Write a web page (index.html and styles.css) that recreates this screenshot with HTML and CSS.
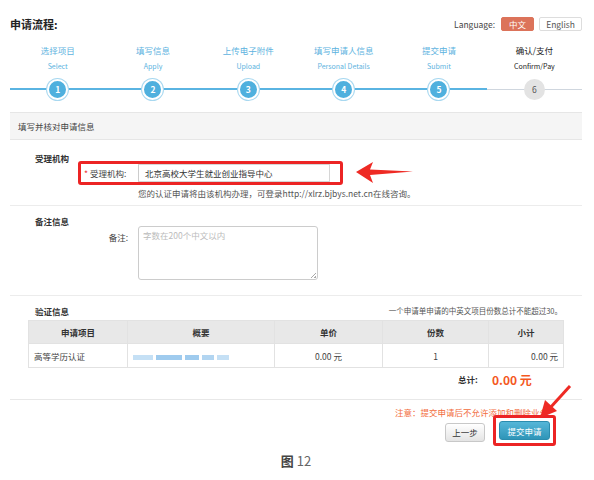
FILE: index.html
```html
<!DOCTYPE html>
<html lang="zh-CN">
<head>
<meta charset="utf-8">
<title>申请流程</title>
<link rel="stylesheet" href="styles.css">
</head>
<body>
<div class="page">
  <div class="topbar">
    <div class="title">申请流程:</div>
    <div class="lang">
      <span class="lang-label">Language:</span>
      <span class="lang-btn active">中文</span>
      <span class="lang-btn">English</span>
    </div>
  </div>

  <div class="steps">
    <div class="step done"><div class="zh">选择项目</div><div class="en">Select</div><div class="track"><span class="dot">1</span></div></div>
    <div class="step done"><div class="zh">填写信息</div><div class="en">Apply</div><div class="track"><span class="dot">2</span></div></div>
    <div class="step done"><div class="zh">上传电子附件</div><div class="en">Upload</div><div class="track"><span class="dot">3</span></div></div>
    <div class="step done"><div class="zh">填写申请人信息</div><div class="en">Personal Details</div><div class="track"><span class="dot">4</span></div></div>
    <div class="step done"><div class="zh">提交申请</div><div class="en">Submit</div><div class="track"><span class="dot">5</span></div></div>
    <div class="step todo"><div class="zh">确认/支付</div><div class="en">Confirm/Pay</div><div class="track"><span class="dot">6</span></div></div>
  </div>

  <div class="bar">填写并核对申请信息</div>

  <div class="section sec-org">
    <div class="sec-title">受理机构</div>
    <div class="org-row">
      <div class="mark-box">
        <label class="field-label"><span class="req">*</span> 受理机构:</label>
        <div class="input">北京高校大学生就业创业指导中心</div>
      </div>
      <svg class="arrow-left" width="58" height="22" viewBox="0 0 58 22"><polygon points="0,10 17,0 14,7.5 57,9.5 14,13 17,21" fill="#ee2a24"/></svg>
    </div>
    <div class="help">您的认证申请将由该机构办理，可登录http://xlrz.bjbys.net.cn在线咨询。</div>
  </div>

  <div class="section sec-note">
    <div class="sec-title">备注信息</div>
    <div class="note-row">
      <label class="field-label right">备注:</label>
      <div class="textarea"><span class="ph">字数在200个中文以内</span><span class="grip"></span></div>
    </div>
  </div>

  <div class="section sec-verify">
    <div class="verify-head">
      <div class="sec-title">验证信息</div>
      <div class="limit">一个申请单申请的中英文项目份数总计不能超过30。</div>
    </div>
    <table class="items">
      <thead>
        <tr><th class="c1">申请项目</th><th class="c2">概要</th><th class="c3">单价</th><th class="c4">份数</th><th class="c5">小计</th></tr>
      </thead>
      <tbody>
        <tr>
          <td class="left">高等学历认证</td>
          <td class="left"><span class="blur"><i class="b1"></i><i class="b2"></i><i class="b3"></i><i class="b4"></i><i class="b5"></i></span></td>
          <td class="center">0.00 元</td>
          <td class="center qty">1</td>
          <td class="right">0.00 元</td>
        </tr>
      </tbody>
    </table>
    <div class="total"><span class="total-label">总计:</span><span class="total-val">0.00 元</span></div>
  </div>

  <div class="footer">
    <div class="warn">注意：提交申请后不允许添加和删除业务</div>
    <div class="btns">
      <button class="btn prev">上一步</button>
      <div class="mark-box btn-mark"><button class="btn submit">提交申请</button></div>
    </div>
    <svg class="arrow-down" width="36" height="36" viewBox="0 0 36 36"><line x1="33" y1="1" x2="13" y2="23" stroke="#ee2a24" stroke-width="3"/><polygon points="3,33 8,15 20,26" fill="#ee2a24"/></svg>
  </div>

  <div class="caption"><b>图</b> 12</div>
</div>
</body>
</html>
```
FILE: styles.css
```css
* { box-sizing: border-box; }
body {
  margin: 0;
  background: #fff;
  font-family: "Noto Sans CJK SC", "Noto Sans", sans-serif;
  color: #333;
  font-size: 8.5px;
}
.page {
  width: 594px;
  padding: 0 12px 0 10px;
  position: relative;
}
.topbar {
  margin-top: 17px;
  height: 14px;
  display: flex;
  justify-content: space-between;
  align-items: center;
}
.title {
  font-size: 11px;
  font-weight: bold;
  color: #222;
  line-height: 14px;
}
.lang {
  display: flex;
  align-items: center;
  gap: 5px;
  font-size: 8.5px;
  color: #444;
}
.lang-label { margin-right: 1px; }
.lang-btn {
  height: 14px;
  line-height: 12px;
  padding: 0 6px;
  border: 1px solid #ddd;
  border-radius: 2px;
  color: #555;
  font-size: 8.5px;
}
.lang-btn.active {
  background: #dc735a;
  border-color: #dc735a;
  color: #fff;
  padding: 0 7px;
}
.steps {
  margin-top: 13px;
  display: grid;
  grid-template-columns: repeat(6, 1fr);
}
.step { text-align: center; }
.zh { font-size: 8.5px; line-height: 12px; color: #5db3e0; }
.en { font-size: 7px; line-height: 12px; margin-top: 4px; color: #5db3e0; }
.step.todo .zh, .step.todo .en { color: #222; }
.track {
  margin-top: 6px;
  height: 22px;
  position: relative;
  display: flex;
  justify-content: center;
  align-items: center;
}
.track::before {
  content: "";
  position: absolute;
  left: 0; right: 0; top: 10px;
  height: 2px;
  background: #5ab4e2;
}
.step.todo .track::before { background: #cfd6de; height: 1px; top: 10.5px; }
.dot {
  position: relative;
  width: 21px; height: 21px;
  border-radius: 50%;
  background: #4fb0de;
  border: 2px solid #fff;
  box-shadow: 0 0 0 1px #a8d8f0;
  color: #fff;
  font-weight: bold;
  font-size: 8.5px;
  line-height: 17px;
  text-align: center;
}
.step.todo .dot {
  background: #e3e3e3;
  box-shadow: none;
  border-color: #e3e3e3;
  color: #555;
  font-weight: normal;
}
.bar {
  margin-top: 12px;
  height: 28px;
  line-height: 26px;
  background: #f5f5f5;
  border-top: 1px solid #e6e6e6;
  border-bottom: 1px solid #e6e6e6;
  padding-left: 8px;
  font-size: 8.5px;
  color: #444;
}
.section { border-bottom: 1px solid #ececec; }
.sec-title {
  font-weight: bold;
  font-size: 8.5px;
  line-height: 12px;
  color: #333;
  padding-left: 25px;
}
.sec-org { padding-top: 12px; height: 66px; }
.org-row {
  margin-top: -3px;
  display: flex;
  align-items: center;
  padding-left: 68px;
}
.mark-box {
  border: 3px solid #ec2424;
  border-radius: 3px;
}
.sec-org .mark-box {
  width: 265px;
  height: 24px;
  display: flex;
  align-items: center;
  padding-left: 3px;
}
.field-label {
  width: 54px;
  font-size: 8.5px;
  color: #444;
}
.req { color: #e33; }
.input {
  width: 192px;
  height: 18px;
  border: 1px solid #d6d6d6;
  border-left-color: #ccc;
  line-height: 16px;
  padding-left: 6px;
  font-size: 8.5px;
  color: #333;
}
.arrow-left { margin-left: 13px; }
.help {
  margin-top: 2px;
  padding-left: 128px;
  font-size: 8.5px;
  line-height: 12px;
  color: #555;
}
.sec-note { padding-top: 9px; height: 90px; }
.note-row {
  margin-top: -1px;
  display: flex;
  align-items: flex-start;
  padding-left: 73px;
}
.field-label.right {
  width: 45px;
  text-align: right;
  padding-right: 0;
  margin-top: 5px;
  margin-right: 10px;
}
.textarea {
  position: relative;
  width: 180px;
  height: 54px;
  border: 1px solid #ccc;
  border-radius: 3px;
  padding: 2px 4px;
  line-height: 12px;
}
.ph { color: #bbb; font-size: 8.5px; }
.grip {
  position: absolute;
  right: 1px; bottom: 1px;
  width: 5px; height: 5px;
  background: linear-gradient(135deg, transparent 45%, #aaa 45%, #aaa 55%, transparent 55%, transparent 75%, #aaa 75%);
}
.sec-verify { padding-top: 9px; height: 104px; border-bottom: 1px solid #e8e8e8; }
.verify-head {
  display: flex;
  justify-content: space-between;
  align-items: center;
  padding-right: 20px;
}
.limit { font-size: 7.5px; color: #555; line-height: 12px; }
.items {
  margin-top: 3px;
  margin-left: 18px;
  width: 536px;
  border-collapse: collapse;
  font-size: 8.5px;
}
.items th, .items td {
  border: 1px solid #e2e2e2;
  padding: 0 5px;
}
.items th {
  background: #e8e8e8;
  height: 23px;
  font-weight: bold;
  color: #333;
}
.items td { height: 24px; color: #444; }
.c1 { width: 99px; }
.c2 { width: 147px; }
.c3 { width: 108px; }
.c4 { width: 106px; }
.left { text-align: left; }
.center { text-align: center; }
.right { text-align: right; }
.qty { color: #8a5a2a; }
.blur { display: inline-flex; gap: 3px; height: 6px; align-items: center; filter: blur(0.6px); }
.blur i { display: block; height: 5px; background: #9fcbee; }
.b1 { width: 20px; opacity: .6; }
.b2 { width: 26px; }
.b3 { width: 14px; }
.b4 { width: 12px; opacity: .8; }
.b5 { width: 12px; opacity: .6; }
.total {
  display: flex;
  align-items: center;
  padding-left: 448px;
  margin-top: 4px;
  height: 14px;
}
.total-label { font-weight: bold; width: 34px; font-size: 8.5px; }
.total-val { color: #f4581e; font-weight: bold; font-size: 12px; }
.footer {
  position: relative;
  padding-right: 34px;
}
.warn {
  margin-top: 6px;
  text-align: right;
  color: #f26c3c;
  font-size: 8.5px;
  line-height: 12px;
}
.btns {
  display: flex;
  justify-content: flex-end;
  align-items: center;
  gap: 8px;
  margin-top: -3px;
  margin-right: -8px;
}
.btn {
  font-family: inherit;
  font-size: 8.5px;
  border-radius: 3px;
  cursor: pointer;
  height: 19px;
  padding: 0;
}
.prev {
  width: 40px;
  margin-top: 3px;
  background: linear-gradient(#ffffff, #e4e4e4);
  border: 1px solid #c8c8c8;
  color: #333;
}
.btn-mark {
  padding: 3px;
  border-radius: 3px;
}
.submit {
  width: 51px;
  background: linear-gradient(#55b6d8, #2f95b8);
  border: 1px solid #2b8cae;
  color: #fff;
}
.arrow-down {
  position: absolute;
  right: 9px;
  top: -21px;
}
.caption {
  text-align: center;
  font-size: 13px;
  color: #666;
  line-height: 16px;
  margin-top: 7px;
}
.caption b { color: #444; font-weight: bold; }
```
